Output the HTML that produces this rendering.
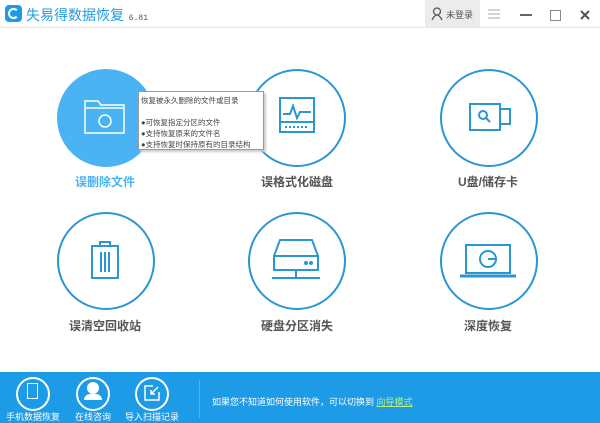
<!DOCTYPE html><html><head><meta charset="utf-8"><style>
body{margin:0;width:600px;height:423px;position:relative;background:#fff;font-family:"Liberation Sans","Noto Sans CJK SC",sans-serif;overflow:hidden}
.c{position:absolute;width:94px;height:94px;border:2px solid #2a96d2;border-radius:50%;box-sizing:content-box}
.l{position:absolute;width:160px;text-align:center;font-size:12px;font-weight:bold;color:#555}
.t{position:absolute;color:#fff;font-size:9px;text-align:center;width:70px}
.bc{position:absolute;width:30px;height:30px;border:2px solid #fff;border-radius:50%}
</style></head><body>
<div style="position:absolute;left:0;top:0;width:600px;height:27px;border-bottom:1px solid #e6e6e6"></div>
<div style="position:absolute;left:5px;top:5px;width:17px;height:17px;background:#1e9be6;border-radius:4px"><div style="position:absolute;left:3px;top:3px;width:7px;height:7px;border:2px solid #fff;border-radius:50%;border-right-color:transparent"></div></div>
<div style="position:absolute;left:26px;top:5px;font-size:14px;color:#1e9be6">失易得数据恢复<span style="font-size:8px;color:#555;font-family:'Liberation Mono'"> 6.81</span></div>
<div style="position:absolute;left:425px;top:0;width:55px;height:27px;background:#ececec"></div>
<svg style="position:absolute;left:431px;top:7px" width="12" height="13"><circle cx="6" cy="4.5" r="3.5" fill="none" stroke="#555" stroke-width="1.3"/><path d="M1 13 Q6 3 11 13" fill="none" stroke="#555" stroke-width="1.3"/></svg>
<div style="position:absolute;left:446px;top:8px;font-size:9px;color:#555">未登录</div>
<svg style="position:absolute;left:487px;top:9px" width="14" height="10"><path d="M1 1H13M1 5H13M1 9H13" stroke="#aaa" stroke-width="1"/></svg>
<div style="position:absolute;left:520px;top:14px;width:12px;height:2px;background:#666"></div>
<div style="position:absolute;left:550px;top:10px;width:9px;height:9px;border:1px solid #888"></div>
<svg style="position:absolute;left:580px;top:10px" width="10" height="10"><path d="M1 1L9 9M9 1L1 9" stroke="#555" stroke-width="2"/></svg>

<div class="c" style="left:57px;top:69px;background:#4ab3f4;border-color:#4ab3f4"></div>
<svg style="position:absolute;left:83px;top:97px" width="44" height="38" fill="none" stroke="#fff" stroke-width="1.5"><path d="M2 4H15L18 8H41V36H2Z M2 11H41"/><circle cx="22" cy="24" r="6"/></svg>
<div class="c" style="left:248px;top:69px"></div>
<svg style="position:absolute;left:276px;top:96px" width="42" height="40" fill="none" stroke="#2a96d2" stroke-width="2"><path d="M4 2H38V36H4Z M4 26H38 M7 18H14L17 10L21 22L24 16H35"/><path d="M9 31H33" stroke-dasharray="2 2"/></svg>
<div class="c" style="left:440px;top:69px"></div>
<svg style="position:absolute;left:468px;top:102px" width="46" height="30" fill="none" stroke="#2a96d2" stroke-width="2"><path d="M2 2H32V28H2Z M32 7H42V22H32"/><circle cx="15" cy="13" r="4"/><path d="M18 16L22 20"/></svg>
<div class="c" style="left:57px;top:212px"></div>
<svg style="position:absolute;left:90px;top:240px" width="30" height="42" fill="none" stroke="#2a96d2" stroke-width="2"><path d="M10 6V2H20V6 M2 6H28V38H2Z M11 12V32M15 12V32M19 12V32"/></svg>
<div class="c" style="left:248px;top:212px"></div>
<svg style="position:absolute;left:270px;top:238px" width="52" height="46" fill="none" stroke="#2a96d2" stroke-width="2"><path d="M10 2H42L48 18V32H4V18Z M4 18H48 M26 32V40 M2 40H50"/><circle cx="36" cy="25" r="1" fill="#2a96d2"/><circle cx="41" cy="25" r="1" fill="#2a96d2"/></svg>
<div class="c" style="left:440px;top:212px"></div>
<svg style="position:absolute;left:459px;top:243px" width="58" height="36" fill="none" stroke="#2a96d2" stroke-width="2"><path d="M7 2H51V30H7Z"/><circle cx="29" cy="16" r="8"/><path d="M29 16H37"/><path d="M1 33H57" stroke-width="3"/></svg>

<div class="l" style="left:25px;top:173px;color:#4ab3f4">误删除文件</div>
<div class="l" style="left:217px;top:173px">误格式化磁盘</div>
<div class="l" style="left:408px;top:173px">U盘/储存卡</div>
<div class="l" style="left:25px;top:317px">误清空回收站</div>
<div class="l" style="left:217px;top:317px">硬盘分区消失</div>
<div class="l" style="left:408px;top:317px">深度恢复</div>

<div style="position:absolute;left:138px;top:91px;width:126px;height:59px;background:#fff;border:1px solid #999;box-shadow:2px 2px 2px #ccc;font-size:7.5px;color:#444;line-height:11px;padding:3px 2px;box-sizing:border-box;white-space:nowrap;overflow:hidden">恢复被永久删除的文件或目录<br><br>●可恢复指定分区的文件<br>●支持恢复原来的文件名<br>●支持恢复时保持原有的目录结构</div>

<div style="position:absolute;left:0;top:372px;width:600px;height:51px;background:#1e9be6"></div>
<div class="bc" style="left:16px;top:377px"></div>
<div class="bc" style="left:76px;top:377px"></div>
<div class="bc" style="left:135px;top:377px"></div>
<div style="position:absolute;left:27px;top:383px;width:9px;height:14px;border:1px solid #fff"></div>
<div style="position:absolute;left:87px;top:382px;width:12px;height:12px;background:#fff;border-radius:50%"></div>
<div style="position:absolute;left:84px;top:394px;width:18px;height:6px;background:#fff;border-radius:8px 8px 0 0"></div>
<svg style="position:absolute;left:143px;top:384px" width="18" height="18" fill="none" stroke="#fff" stroke-width="1.5"><path d="M10 2H2V16H16V8 M15 3L8 10 M8 6V10H12"/></svg>
<div class="t" style="left:-2px;top:410px">手机数据恢复</div>
<div class="t" style="left:58px;top:410px">在线咨询</div>
<div class="t" style="left:117px;top:410px">导入扫描记录</div>
<div style="position:absolute;left:199px;top:380px;width:1px;height:38px;background:#4db3ee"></div>
<div style="position:absolute;left:212px;top:395px;font-size:9px;color:#fff">如果您不知道如何使用软件，可以切换到 <span style="color:#b8f07a;text-decoration:underline">向导模式</span></div>
</body></html>
